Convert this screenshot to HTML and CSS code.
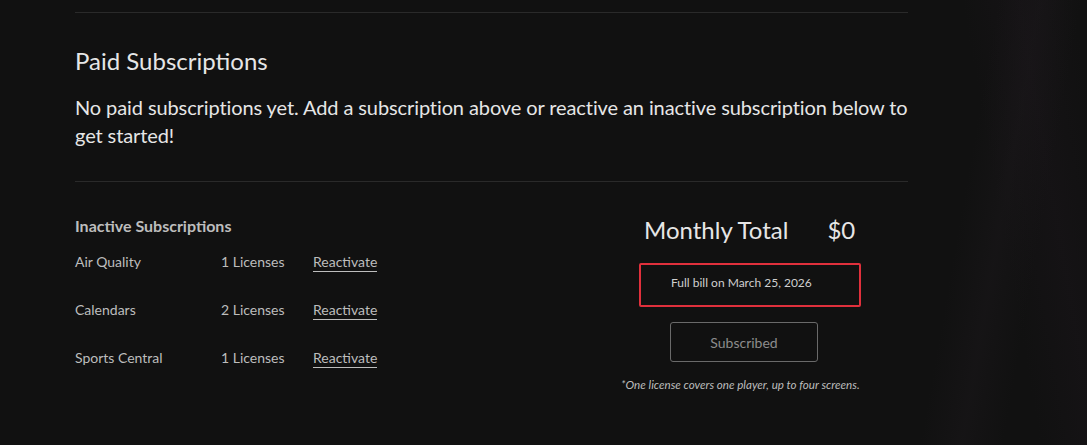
FILE: index.html
```html
<!DOCTYPE html>
<html lang="en">
<head>
<meta charset="utf-8">
<title>Subscriptions</title>
<link rel="stylesheet" href="styles.css">
</head>
<body>
<div class="page">
  <div class="bg-wave"></div>
  <main class="content">
    <hr class="rule">
    <section class="paid">
      <h2 class="paid-title">Paid Subscriptions</h2>
      <p class="paid-empty">No paid subscriptions yet. Add a subscription above or reactive an inactive subscription below to get started!</p>
    </section>
    <hr class="rule">
    <section class="bottom">
      <div class="inactive">
        <h3 class="inactive-title">Inactive Subscriptions</h3>
        <div class="sub-row">
          <span class="sub-name">Air Quality</span>
          <span class="sub-lic">1 Licenses</span>
          <a class="sub-link" href="#">Reactivate</a>
        </div>
        <div class="sub-row">
          <span class="sub-name">Calendars</span>
          <span class="sub-lic">2 Licenses</span>
          <a class="sub-link" href="#">Reactivate</a>
        </div>
        <div class="sub-row">
          <span class="sub-name">Sports Central</span>
          <span class="sub-lic">1 Licenses</span>
          <a class="sub-link" href="#">Reactivate</a>
        </div>
      </div>
      <div class="summary">
        <div class="total">
          <span class="total-label">Monthly Total</span>
          <span class="total-value">$0</span>
        </div>
        <div class="bill-box">Full bill on March 25, 2026</div>
        <button class="sub-btn" type="button">Subscribed</button>
        <p class="footnote">*One license covers one player, up to four screens.</p>
      </div>
    </section>
  </main>
</div>
</body>
</html>
```

FILE: styles.css
```css
* { box-sizing: border-box; }
html, body {
  margin: 0;
  padding: 0;
  background: #111111;
  height: 100%;
}
body {
  font-family: Lato, "Open Sans", sans-serif;
  color: #e6e6e6;
  overflow: hidden;
}
.page {
  position: relative;
  width: 1087px;
  height: 445px;
  overflow: hidden;
}
.bg-wave {
  position: absolute;
  top: 0;
  right: 0;
  width: 200px;
  height: 445px;
  background:
    linear-gradient(100deg, rgba(0,0,0,0) 40%, rgba(30,26,30,0.35) 55%, rgba(0,0,0,0) 70%),
    linear-gradient(80deg, rgba(0,0,0,0) 55%, rgba(28,22,28,0.35) 75%, rgba(0,0,0,0) 95%);
  pointer-events: none;
}
.content {
  position: relative;
  width: 833px;
  margin-left: 75px;
  padding-top: 12px;
}
.rule {
  border: 0;
  border-top: 1px solid #2a2a2a;
  margin: 0;
}
.paid {
  padding-top: 33px;
  padding-bottom: 32px;
}
.paid-title {
  margin: 0;
  font-size: 24px;
  font-weight: 400;
  line-height: 30px;
  color: #e6e6e6;
}
.paid-empty {
  margin: 17px -6px 0 0;
  font-size: 20px;
  line-height: 28px;
  letter-spacing: -0.1px;
  color: #e6e6e6;
}
.bottom {
  display: flex;
  padding-top: 34px;
}
.inactive {
  width: 546px;
}
.inactive-title {
  margin: 0;
  font-size: 16px;
  font-weight: 700;
  line-height: 20px;
  color: #bdbdbd;
}
.sub-row {
  display: flex;
  font-size: 14px;
  line-height: 20px;
  color: #bdbdbd;
  margin-top: 16px;
}
.sub-row + .sub-row {
  margin-top: 28px;
}
.sub-name { width: 146px; }
.sub-lic { width: 92px; }
.sub-link {
  color: #bdbdbd;
  text-decoration: none;
  border-bottom: 1px solid #bdbdbd;
  line-height: 19px;
}
.summary {
  width: 240px;
  margin-top: -1px;
  display: flex;
  flex-direction: column;
}
.total {
  display: flex;
  gap: 39px;
  margin-left: 23px;
  font-size: 24px;
  line-height: 30px;
  color: #e6e6e6;
}
.bill-box {
  margin-left: 18px;
  margin-top: 18px;
  width: 222px;
  height: 44px;
  border: 2px solid #e0303c;
  border-radius: 2px;
  padding: 10px 0 0 30px;
  font-size: 12px;
  line-height: 16px;
  color: #cfcfcf;
}
.sub-btn {
  margin-left: 49px;
  margin-top: 15px;
  width: 148px;
  height: 40px;
  background: transparent;
  border: 1px solid #6a6a6a;
  border-radius: 3px;
  font-family: Lato, sans-serif;
  font-size: 14px;
  color: #8c8c8c;
}
.footnote {
  margin: 16px 0 0;
  font-size: 11.6px;
  font-style: italic;
  color: #bdbdbd;
  white-space: nowrap;
}
```
